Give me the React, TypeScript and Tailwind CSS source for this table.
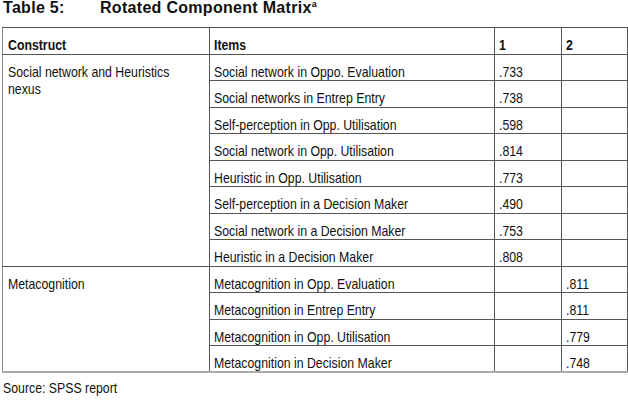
const ROWS_A = [
  ["Social network in Oppo. Evaluation", ".733"],
  ["Social networks in Entrep Entry", ".738"],
  ["Self-perception in Opp. Utilisation", ".598"],
  ["Social network in Opp. Utilisation", ".814"],
  ["Heuristic in Opp. Utilisation", ".773"],
  ["Self-perception in a Decision Maker", ".490"],
  ["Social network in a Decision Maker", ".753"],
  ["Heuristic in a Decision Maker", ".808"],
];

const ROWS_B = [
  ["Metacognition in Opp. Evaluation", ".811"],
  ["Metacognition in Entrep Entry", ".811"],
  ["Metacognition in Opp. Utilisation", ".779"],
  ["Metacognition in Decision Maker", ".748"],
];

const cell = "border border-[#555] align-top pl-[4px] pt-[8px] leading-[17px] whitespace-nowrap";

// no narrow face installed, so squeeze Liberation Sans to Arial Narrow's width
function N({ children }: { children: React.ReactNode }) {
  return <span className="inline-block origin-left scale-x-[0.82]">{children}</span>;
}

export default function App() {
  return (
    <div className="w-[628px] h-[400px] bg-white text-[#111] font-['Liberation_Sans',Arial,sans-serif]">
      <div className="h-[27px] pl-[3px] text-[16px] font-bold leading-[15px] tracking-[0.3px]">
        <span className="inline-block w-[97px]">Table 5:</span>
        <span>Rotated Component Matrix</span>
        <span className="relative -top-[6px] text-[9px] tracking-normal">a</span>
      </div>

      <table className="ml-[2px] w-[625px] table-fixed border-collapse text-[15px]">
        <colgroup>
          <col className="w-[207px]" />
          <col className="w-[285px]" />
          <col className="w-[67px]" />
          <col className="w-[66px]" />
        </colgroup>
        <thead>
          <tr className="h-[26.5px] font-bold">
            <td className={`${cell} border-l-[#888] pl-[5px]`}><N>Construct</N></td>
            <td className={cell}><N>Items</N></td>
            <td className={cell}><N>1</N></td>
            <td className={cell}><N>2</N></td>
          </tr>
        </thead>
        <tbody>
          {ROWS_A.map(([item, v], i) => (
            <tr key={item} className="h-[26.5px]">
              {i === 0 && (
                <td rowSpan={8} className={`${cell} border-l-[#888] pl-[5px]`}>
                  <N>Social network and Heuristics</N>
                  <br />
                  <N>nexus</N>
                </td>
              )}
              <td className={cell}><N>{item}</N></td>
              <td className={cell}><N>{v}</N></td>
              <td className={cell}></td>
            </tr>
          ))}
          {ROWS_B.map(([item, v], i) => {
            const last = i === 3 ? "border-b-2 border-b-[#aaa]" : "";
            return (
              <tr key={item} className="h-[26.5px]">
                {i === 0 && (
                  <td rowSpan={4} className={`${cell} border-l-[#888] border-b-2 border-b-[#aaa] pl-[5px]`}>
                    <N>Metacognition</N>
                  </td>
                )}
                <td className={`${cell} ${last}`}><N>{item}</N></td>
                <td className={`${cell} ${last}`}></td>
                <td className={`${cell} ${last}`}><N>{v}</N></td>
              </tr>
            );
          })}
        </tbody>
      </table>

      <div className="mt-[6px] pl-[3px] text-[15px] leading-[17px]"><N>Source: SPSS report</N></div>
    </div>
  );
}
